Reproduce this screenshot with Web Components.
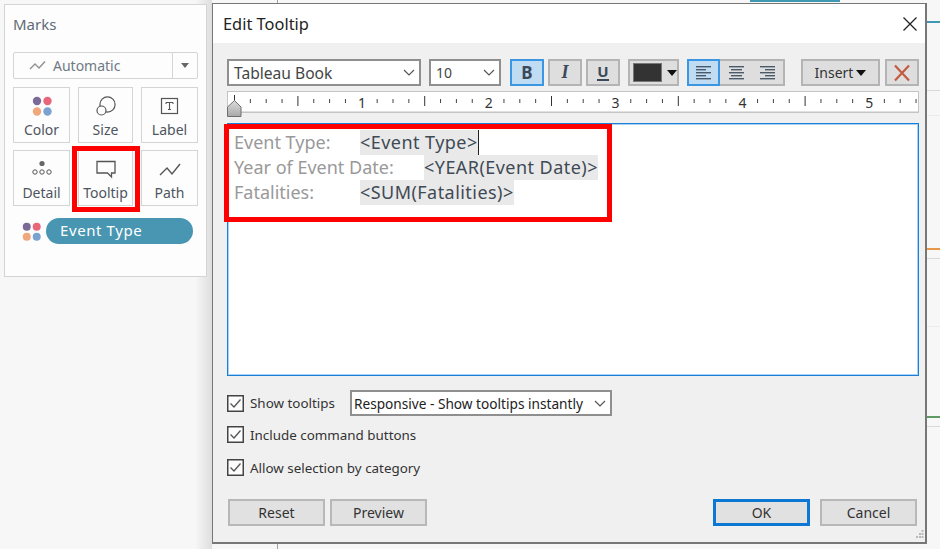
<!DOCTYPE html>
<html>
<head>
<meta charset="utf-8">
<title>Edit Tooltip</title>
<style>
  html, body { margin: 0; padding: 0; }
  body { width: 940px; height: 549px; overflow: hidden; font-family: "Noto Sans", sans-serif; }
</style>
</head>
<body>
<workbook-view>
  <marks-card slot="side"></marks-card>
  <tooltip-dialog slot="main"></tooltip-dialog>
</workbook-view>

<script>
// small helper, every component is the same shape
function shadow(el, html) {
  el.attachShadow({ mode: 'open' }).innerHTML = html;
}

const CHEVRON = `<svg width="12" height="7" viewBox="0 0 12 7" style="flex:none"><path d="M1 1l5 5 5-5" fill="none" stroke="#555" stroke-width="1.2"/></svg>`;

class WorkbookView extends HTMLElement {
  connectedCallback() {
    shadow(this, `
      <style>
        :host {
          display: flex;
          width: 940px;
          height: 549px;
          overflow: hidden;
          background:
            linear-gradient(90deg, transparent 0, transparent 195px, rgba(0,0,0,.1) 212px, transparent 212px),
            linear-gradient(#3f97b1, #3f97b1) 927px 21px / 13px 2px no-repeat,
            linear-gradient(#d9d9d9, #d9d9d9) 927px 90px / 13px 1px no-repeat,
            linear-gradient(#ececec, #ececec) 927px 115px / 13px 1px no-repeat,
            linear-gradient(#e8964a, #e8964a) 927px 248px / 13px 2px no-repeat,
            linear-gradient(#d9d9d9, #d9d9d9) 927px 258px / 13px 1px no-repeat,
            linear-gradient(#ececec, #ececec) 927px 326px / 13px 1px no-repeat,
            linear-gradient(#5f9a63, #5f9a63) 927px 416px / 13px 2px no-repeat,
            linear-gradient(#d9d9d9, #d9d9d9) 927px 426px / 13px 1px no-repeat,
            linear-gradient(#3f97b1, #3f97b1) 750px 0 / 90px 2px no-repeat,
            linear-gradient(#a0a0a0, #a0a0a0) 277px 0 / 1px 549px no-repeat,
            linear-gradient(#f7f7f7, #f7f7f7);
        }
      </style>
      <slot name="side"></slot>
      <slot name="main"></slot>
    `);
  }
}

class MarksCard extends HTMLElement {
  connectedCallback() {
    const dots = (s) => `<svg width="${s}" height="${s}" viewBox="0 0 20 20">
      <circle cx="5" cy="5" r="4.2" fill="#7b6a97"/><circle cx="15.5" cy="5" r="4.2" fill="#e8667a"/>
      <circle cx="5" cy="15.5" r="4.2" fill="#f0a77c"/><circle cx="15.5" cy="15.5" r="4.2" fill="#7ba3cf"/></svg>`;
    shadow(this, `
      <style>
        :host {
          display: block;
          box-sizing: border-box;
          width: 203px;
          height: 273px;
          margin: 4px 0 0 4px;
          padding: 9px 8px 0 8px;
          background: #fdfdfd;
          border: 1px solid #d4d4d4;
          color: #555;
        }
        .title { font-size: 15px; line-height: 20px; color: #5f6b78; }
        .kind {
          display: flex;
          align-items: center;
          height: 27px;
          box-sizing: border-box;
          margin-top: 18px;
          border: 1px solid #d4d4d4;
          border-radius: 2px;
          font-size: 14px;
          color: #6f7984;
        }
        .kind svg { margin-left: 15px; }
        .kind span { margin-left: 7px; flex: 1; }
        .kind i {
          width: 24px; height: 100%;
          border-left: 1px solid #d4d4d4;
          display: flex; align-items: center; justify-content: center;
        }
        .kind i::after {
          content: ""; border: 4px solid transparent; border-top: 5px solid #666; border-bottom: 0;
        }
        .grid {
          display: grid;
          grid-template-columns: 57px 55px 57px;
          grid-auto-rows: 56px;
          column-gap: 8px;
          row-gap: 7px;
          margin-top: 8px;
        }
        .field { display: flex; align-items: center; margin: 12px 5px 0 9px; gap: 5px; }
      </style>
      <div class="title">Marks</div>
      <div class="kind">
        <svg width="17" height="11" viewBox="0 0 17 11"><path d="M1 9l5-5 4 4 6-6.500" fill="none" stroke="#909090" stroke-width="1.400"/></svg>
        <span>Automatic</span><i></i>
      </div>
      <div class="grid">
        <mark-button>
          ${dots(20).replace('<svg', '<svg slot="icon"')}Color
        </mark-button>
        <mark-button>
          <svg slot="icon" width="22" height="22" viewBox="0 0 22 22"><circle cx="12.5" cy="9.5" r="7.6" fill="none" stroke="#555" stroke-width="1.2"/><circle cx="6.5" cy="15.5" r="4.5" fill="#fdfdfd" stroke="#555" stroke-width="1.2"/></svg>Size
        </mark-button>
        <mark-button>
          <svg slot="icon" width="20" height="20" viewBox="0 0 20 20"><rect x="1.5" y="2.5" width="16" height="15" fill="none" stroke="#555" stroke-width="1.2"/><path d="M6 6.5h7M9.500 6.500v7M8 13.500h3M6 6.500v1.500M13 6.500v1.500" fill="none" stroke="#555" stroke-width="1.100"/></svg>Label
        </mark-button>
        <mark-button>
          <svg slot="icon" width="22" height="20" viewBox="0 0 22 20"><circle cx="11" cy="4.500" r="2.600" fill="#666"/><circle cx="4" cy="13" r="2.200" fill="none" stroke="#555"/><circle cx="11" cy="13" r="2.200" fill="none" stroke="#555"/><circle cx="18" cy="13" r="2.200" fill="none" stroke="#555"/></svg>Detail
        </mark-button>
        <mark-button highlight>
          <svg slot="icon" width="22" height="20" viewBox="0 0 22 20"><path d="M2 2.500h18v11.500h-3.500v4l-4-4H2z" fill="none" stroke="#555" stroke-width="1.300"/></svg>Tooltip
        </mark-button>
        <mark-button>
          <svg slot="icon" width="22" height="16" viewBox="0 0 22 16"><path d="M1 14l7-7 5 6 8-10" fill="none" stroke="#555" stroke-width="1.400"/></svg>Path
        </mark-button>
      </div>
      <div class="field">${dots(19)}<field-pill>Event Type</field-pill></div>
    `);
  }
}

class MarkButton extends HTMLElement {
  connectedCallback() {
    shadow(this, `
      <style>
        :host {
          position: relative;
          display: flex;
          flex-direction: column;
          align-items: center;
          box-sizing: border-box;
          border: 1px solid #d4d4d4;
          font-size: 14px;
          line-height: 18px;
          color: #4f5560;
        }
        .icon { height: 22px; margin-top: 7px; margin-bottom: 4px; display: flex; align-items: center; }
        :host([highlight])::after {
          content: "";
          position: absolute;
          inset: -5px -8px -7px -7px;
          border: 5px solid #fe0000;
        }
      </style>
      <div class="icon"><slot name="icon"></slot></div>
      <slot></slot>
    `);
  }
}

class FieldPill extends HTMLElement {
  connectedCallback() {
    shadow(this, `
      <style>
        :host {
          display: block;
          flex: 1;
          height: 26px;
          box-sizing: border-box;
          padding-left: 14px;
          border-radius: 13px;
          background: #4996b2;
          color: #fff;
          font-size: 15px;
          line-height: 25px;
          letter-spacing: .6px;
        }
      </style>
      <slot></slot>
    `);
  }
}

class TbButton extends HTMLElement {
  connectedCallback() {
    shadow(this, `
      <style>
        :host {
          display: flex;
          flex: none;
          align-items: center;
          justify-content: center;
          box-sizing: border-box;
          height: 27px;
          border: 2px solid #b4b4b4;
          background: #dedede;
          color: #3a4a5a;
          font-size: 14px;
        }
        :host([active]) { background: #c0dcf3; border-color: #3b97e3; }
      </style>
      <slot></slot>
    `);
  }
}

class TbSelect extends HTMLElement {
  connectedCallback() {
    shadow(this, `
      <style>
        :host {
          display: flex;
          flex: none;
          align-items: center;
          justify-content: space-between;
          box-sizing: border-box;
          height: 27px;
          padding: 0 4px 0 5px;
          border: 2px solid #8f8f8f;
          background: #fff;
          color: #444;
          font-size: 15.6px;
        }
      </style>
      <slot></slot>${CHEVRON}
    `);
  }
}

class RulerBar extends HTMLElement {
  connectedCallback() {
    const step = 126.8 / 8;
    let marks = '';
    for (let i = 0; i < 44; i++) {
      const x = 6.5 + i * step;
      if (i % 8 === 0 && i > 0) {
        marks += `<text x="${x + .7}" y="16" text-anchor="middle" font-size="14" fill="#333" font-family="Noto Sans">${i / 8}</text>`;
      } else if (i % 4 === 0) {
        marks += `<rect x="${x - .5}" y="${i ? 4 : 3}" width="1" height="10" fill="#333"/>`;
      } else {
        marks += `<rect x="${x - .5}" y="7" width="1" height="4" fill="#444"/>`;
      }
    }
    shadow(this, `
      <style>
        :host {
          position: relative;
          display: block;
          box-sizing: border-box;
          height: 22px;
          margin-top: 5px;
          background: #fff;
          border: 1px solid #c4c4c4;
          border-bottom: 0;
        }
        svg { display: block; }
        .thumb { position: absolute; left: -1px; top: 8px; }
      </style>
      <svg width="690" height="21" viewBox="0 0 690 21">${marks}<rect x="0" y="19.500" width="690" height="1.500" fill="#c4c4c4"/></svg>
      <svg class="thumb" width="15" height="17" viewBox="0 0 15 17">
        <defs><linearGradient id="g" x1="0" y1="0" x2="0" y2="1"><stop offset="0" stop-color="#dcdcdc"/><stop offset="1" stop-color="#a8a8a8"/></linearGradient></defs>
        <path d="M.5 7L7.500.5l6.500 6.500v9.500H.5z" fill="url(#g)" stroke="#6f6f6f"/>
      </svg>
    `);
  }
}

class TooltipEditor extends HTMLElement {
  connectedCallback() {
    shadow(this, `
      <style>
        :host {
          position: relative;
          display: block;
          box-sizing: border-box;
          height: 253px;
          margin-top: 10px;
          padding: 6px 0 0 6px;
          background: #fff;
          border: 1px solid #1a7fd8;
          box-shadow: inset 0 0 0 1px #a9d1f3;
          font-size: 18px;
          line-height: 25px;
        }
        .line { display: flex; height: 25px; white-space: nowrap; }
        .label { color: #999; flex: none; }
        .tag { color: #3f4a55; background: #e9e9e9; letter-spacing: .45px; }
        .caret { width: 1.500px; background: #222; }
        .box {
          position: absolute;
          left: -4px; top: 0;
          width: 388px; height: 98px;
          box-sizing: border-box;
          border: 5px solid #fe0000;
        }
      </style>
      <div class="line"><span class="label" style="width:126px">Event Type:</span><span class="tag">&lt;Event Type&gt;</span><span class="caret"></span></div>
      <div class="line"><span class="label" style="width:190px">Year of Event Date:</span><span class="tag">&lt;YEAR(Event Date)&gt;</span></div>
      <div class="line"><span class="label" style="width:126px">Fatalities:</span><span class="tag">&lt;SUM(Fatalities)&gt;</span></div>
      <div class="box"></div>
    `);
  }
}

class TbCheck extends HTMLElement {
  connectedCallback() {
    shadow(this, `
      <style>
        :host {
          display: flex;
          align-items: center;
          gap: 6px;
          height: 17px;
          font-size: 13.4px;
          color: #333;
          white-space: nowrap;
        }
        svg { flex: none; }
      </style>
      <svg width="17" height="17" viewBox="0 0 17 17">
        <rect x=".75" y=".75" width="15.500" height="15.500" fill="#fdfdfd" stroke="#444" stroke-width="1.500"/>
        <path d="M3.500 8.500l3.500 3.500 6.500-7.500" fill="none" stroke="#555" stroke-width="1.300"/>
      </svg>
      <slot></slot>
    `);
  }
}

class TooltipDialog extends HTMLElement {
  connectedCallback() {
    const lines = (xs) => `<svg width="18" height="15" viewBox="0 0 18 15">${xs.map((l, i) =>
      `<rect x="${l[0]}" y="${1 + i * 3}" width="${l[1]}" height="1.400" fill="#4a5a6a"/>`).join('')}</svg>`;
    shadow(this, `
      <style>
        :host {
          display: flex;
          flex-direction: column;
          box-sizing: border-box;
          width: 715px;
          height: 541px;
          margin: 3px 0 0 5px;
          background: #f0f0f0;
          border: 1px solid #777;
          border-width: 1px 2px 2px 1px;
          color: #333;
        }
        .titlebar {
          display: flex;
          align-items: center;
          justify-content: space-between;
          flex: none;
          height: 39px;
          padding: 0 4px 0 10px;
          background: #fff;
          font-size: 16.400px;
          color: #222;
        }
        .body { position: relative; flex: 1; padding: 16px 6px 0 14px; }
        .toolbar { display: flex; height: 27px; }
        .opts { display: flex; flex-direction: column; margin-top: 14px; }
        .row { display: flex; align-items: center; height: 26px; }
        .row + tb-check { margin-top: 10px; }
        tb-check + tb-check { margin-top: 16px; }
        .footer {
          display: flex;
          justify-content: space-between;
          margin-top: 23px;
          padding: 0 2px 0 1px;
        }
        .footer div { display: flex; }
        .btn { height: 27px; width: 97px; color: #333; background: #e1e1e1; border: 1px solid #b8b8b8; border-width: 2px; }
        .grip { position: absolute; right: 1px; bottom: 3px; }
      </style>
      <div class="titlebar">
        <span>Edit Tooltip</span>
        <svg width="22" height="22" viewBox="0 0 22 22"><path d="M4.500 4.500l13 13M17.500 4.500l-13 13" stroke="#222" stroke-width="1.300" fill="none"/></svg>
      </div>
      <div class="body">
        <div class="toolbar">
          <tb-select style="width:194px">Tableau Book</tb-select>
          <tb-select style="width:72px;margin-left:8px;font-size:14px">10</tb-select>
          <tb-button active style="width:34px;margin-left:9px;font-weight:700;font-size:17px">B</tb-button>
          <tb-button style="width:34px;margin-left:4px;font-weight:700;font-style:italic;font-size:18px;font-family:'Liberation Serif',serif">I</tb-button>
          <tb-button style="width:34px;margin-left:4px;font-weight:700;font-size:15px"><span style="border-bottom:2px solid #3a4a5a;line-height:15px">U</span></tb-button>
          <tb-button style="width:51px;margin-left:8px;gap:5px;justify-content:flex-start;padding-left:3px">
            <span style="width:28px;height:17px;background:#333;border:1px solid #777"></span>
            <span style="border:5px solid transparent;border-top:6px solid #111;border-bottom:0"></span>
          </tb-button>
          <tb-button active style="width:33px;margin-left:8px">${lines([[1,15],[1,10],[1,15],[1,10],[1,15]])}</tb-button>
          <tb-button style="width:33px;border-left:0;border-right:0">${lines([[1,15],[3,11],[1,15],[3,11],[1,15]])}</tb-button>
          <tb-button style="width:32px;border-left:0">${lines([[1,15],[6,10],[1,15],[6,10],[1,15]])}</tb-button>
          <tb-button style="width:79px;margin-left:16px;gap:3px;color:#333">Insert<span style="border:5px solid transparent;border-top:6px solid #111;border-bottom:0"></span></tb-button>
          <tb-button style="width:34px;margin-left:5px">
            <svg width="20" height="20" viewBox="0 0 20 20"><path d="M3 2.500l14 15M17 2.500l-14 15" stroke="#c25b3f" stroke-width="2.200" fill="none"/></svg>
          </tb-button>
        </div>
        <ruler-bar></ruler-bar>
        <tooltip-editor></tooltip-editor>
        <div class="opts">
          <div class="row">
            <tb-check style="width:108px">Show tooltips</tb-check>
            <tb-select style="width:262px;margin-left:15px;height:26px;font-size:13.650px;padding:0 4px 0 2px;color:#222">Responsive - Show tooltips instantly</tb-select>
          </div>
          <tb-check>Include command buttons</tb-check>
          <tb-check>Allow selection by category</tb-check>
        </div>
        <div class="footer">
          <div>
            <tb-button class="btn">Reset</tb-button>
            <tb-button class="btn" style="margin-left:5px">Preview</tb-button>
          </div>
          <div>
            <tb-button class="btn" style="border:3px solid #0c78d4;margin-right:10px">OK</tb-button>
            <tb-button class="btn">Cancel</tb-button>
          </div>
        </div>
        <svg class="grip" width="8" height="9" viewBox="0 0 8 9" fill="#b9b9b9">
          <rect x="5.500" y="0" width="2" height="2"/><rect x="3" y="3" width="2" height="2"/><rect x="5.500" y="3" width="2" height="2"/>
          <rect x="0" y="6" width="2" height="2"/><rect x="3" y="6" width="2" height="2"/><rect x="5.500" y="6" width="2" height="2"/>
        </svg>
      </div>
    `);
  }
}

// children first, so the parents find them ready
customElements.define('mark-button', MarkButton);
customElements.define('field-pill', FieldPill);
customElements.define('tb-button', TbButton);
customElements.define('tb-select', TbSelect);
customElements.define('tb-check', TbCheck);
customElements.define('ruler-bar', RulerBar);
customElements.define('tooltip-editor', TooltipEditor);
customElements.define('marks-card', MarksCard);
customElements.define('tooltip-dialog', TooltipDialog);
customElements.define('workbook-view', WorkbookView);
</script>
</body>
</html>
